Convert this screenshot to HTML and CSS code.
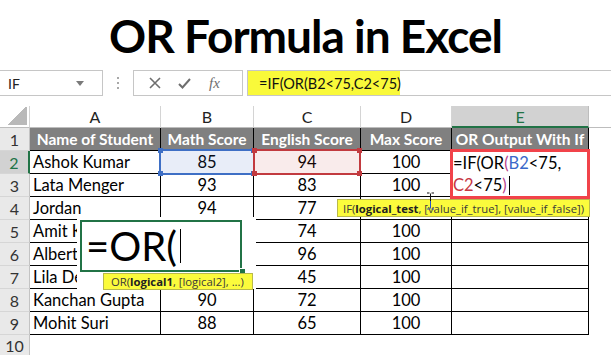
FILE: index.html
```html
<!DOCTYPE html>
<html>
<head>
<meta charset="utf-8">
<link rel="stylesheet" href="styles.css">
</head>
<body>
<h1 class="title">OR Formula in Excel</h1>
<div class="fbar">
  <div class="namebox"><span>IF</span><svg class="dd" width="8" height="5" viewBox="0 0 8 5"><path d="M0 0H8L4 5Z" fill="#7a7a7a"/></svg></div>
  <div class="dots"><span></span><span></span><span></span></div>
  <div class="btns">
    <svg width="12" height="12" viewBox="0 0 12 12"><path d="M1 1L11 11M11 1L1 11" stroke="#6e6e6e" stroke-width="1.6"/></svg>
    <svg width="13" height="11" viewBox="0 0 13 11"><path d="M1 6L4.5 9.5L12 1" stroke="#6e6e6e" stroke-width="2" fill="none"/></svg>
    <span class="fx">fx</span>
  </div>
  <div class="formula"><span class="hl">=IF(OR(B2&lt;75,C2&lt;75)</span></div>
</div>
<div class="sheet">
  <div class="corner"></div><div class="ch">A</div><div class="ch">B</div><div class="ch">C</div><div class="ch">D</div><div class="ch sel">E</div><div class="ch rest"></div>

  <div class="rn">1</div><div class="hd">Name of Student</div><div class="hd">Math Score</div><div class="hd">English Score</div><div class="hd">Max Score</div><div class="hd">OR Output With If</div><div class="blank"></div>

  <div class="rn act">2</div><div class="c l">Ashok Kumar</div><div class="c">85</div><div class="c">94</div><div class="c">100</div><div class="c"></div><div class="blank"></div>
  <div class="rn">3</div><div class="c l">Lata Menger</div><div class="c">93</div><div class="c">83</div><div class="c">100</div><div class="c"></div><div class="blank"></div>
  <div class="rn">4</div><div class="c l">Jordan</div><div class="c">94</div><div class="c">77</div><div class="c"></div><div class="c"></div><div class="blank"></div>
  <div class="rn">5</div><div class="c l">Amit K</div><div class="c"></div><div class="c">74</div><div class="c">100</div><div class="c"></div><div class="blank"></div>
  <div class="rn">6</div><div class="c l">Albert</div><div class="c"></div><div class="c">96</div><div class="c">100</div><div class="c"></div><div class="blank"></div>
  <div class="rn">7</div><div class="c l">Lila De</div><div class="c"></div><div class="c">45</div><div class="c">100</div><div class="c"></div><div class="blank"></div>
  <div class="rn">8</div><div class="c l">Kanchan Gupta</div><div class="c">90</div><div class="c">72</div><div class="c">100</div><div class="c"></div><div class="blank"></div>
  <div class="rn">9</div><div class="c l">Mohit Suri</div><div class="c">88</div><div class="c">65</div><div class="c">100</div><div class="c"></div><div class="blank"></div>
  <div class="rn last">10</div><div class="blank span"></div>

  <div class="rng rb"><i class="tl"></i><i class="tr"></i><i class="bl"></i><i class="br"></i></div>
  <div class="rng rc"><i class="tl"></i><i class="tr"></i><i class="bl"></i><i class="br"></i></div>

  <div class="edit">=IF(OR<span class="pp">(</span><span class="cb">B2</span>&lt;75,<br><span class="cr">C2</span>&lt;75<span class="pp">)</span><span class="caret"></span></div>

  <div class="tip tip-if">IF(<b>logical_test</b>, [value_if_true], [value_if_false])</div>
  <svg class="ibeam" width="9" height="18" viewBox="0 0 9 18"><path d="M1 1H3.5M5.5 1H8M4.5 1.5V9" stroke="#111" stroke-width="1" fill="none"/><path d="M4.5 9V16.5M1 17H3.5M5.5 17H8" stroke="#2a55c8" stroke-width="1" fill="none"/></svg>

  <div class="zoombox"><div class="zin">=OR(<span class="zcaret"></span></div><i class="zsq"></i></div>
  <div class="tip tip-or">OR(<b>logical1</b>, [logical2], ...)</div>
</div>
</body>
</html>
```
FILE: styles.css
```css
html, body {
  margin: 0;
  padding: 0;
  background: #fff;
  width: 611px;
  height: 355px;
  overflow: hidden;
  font-family: Lato, "Open Sans", sans-serif;
}

.title {
  margin: 0;
  height: 70px;
  display: flex;
  align-items: center;
  justify-content: center;
  padding-top: 1px;
  box-sizing: border-box;
  font-family: Lato, sans-serif;
  font-weight: 700;
  font-size: 46px;
  color: #000;
  letter-spacing: -1px;
}

.fbar {
  display: flex;
  align-items: stretch;
  height: 26px;
  font-family: Lato, sans-serif;
}

.namebox {
  width: 103px;
  box-sizing: border-box;
  border: 1px solid #c6c6c6;
  border-left: none;
  display: flex;
  align-items: center;
  justify-content: space-between;
  padding: 0 18px 0 8px;
  font-size: 14px;
  color: #222;
}

.dots {
  width: 30px;
  display: flex;
  flex-direction: column;
  align-items: center;
  justify-content: center;
  gap: 3px;
}
.dots span {
  width: 2px;
  height: 2px;
  background: #a8a8a8;
}

.btns {
  width: 110px;
  box-sizing: border-box;
  border: 1px solid #c6c6c6;
  display: flex;
  align-items: center;
  gap: 17px;
  padding-left: 15px;
}
.fx {
  font-family: "Liberation Serif", serif;
  font-style: italic;
  font-size: 15px;
  color: #6e6e6e;
  margin-left: 1px;
}

.formula {
  flex: 1;
  margin-left: 4px;
  box-sizing: border-box;
  border: 1px solid #c6c6c6;
  border-right: none;
  display: flex;
}
.hl {
  width: 152px;
  background: #f9f93a;
  font-size: 14.5px;
  color: #111;
  padding-left: 11px;
  box-sizing: border-box;
  display: flex;
  align-items: center;
}

.sheet {
  position: relative;
  margin-top: 10px;
  display: grid;
  grid-template-columns: 30px 131px 93px 107px 91px 137px 1fr;
  grid-template-rows: 22px repeat(9, 23px) 1fr;
  height: 249px;
  font-size: 16.5px;
  color: #000;
}
.sheet > div {
  box-sizing: border-box;
}

.corner {
  position: relative;
  border-right: 1px solid #d4d4d4;
  border-bottom: 1px solid #bdbdbd;
  background: linear-gradient(135deg, #fff 50%, #b9b9b9 50%) no-repeat;
  background-size: 20px 18px;
  background-position: right 2px bottom 2px;
}

.ch {
  border-right: 1px solid #d4d4d4;
  border-bottom: 1px solid #bdbdbd;
  display: flex;
  align-items: center;
  justify-content: center;
  font-size: 16px;
  color: #222;
}
.ch.sel {
  background: #d2d2d2;
  color: #217346;
  border-bottom: 2px solid #217346;
  border-right-color: #bdbdbd;
}
.ch.rest {
  border-right: none;
}

.rn {
  background: #e9e9e9;
  border-right: 1px solid #c3c3c3;
  border-bottom: 1px solid #d6d6d6;
  display: flex;
  align-items: center;
  justify-content: center;
  font-size: 16px;
  color: #333;
}
.rn.act {
  background: #d2d2d2;
  color: #217346;
  border-right: 2px solid #217346;
}
.rn.last {
  border-bottom: none;
}

.hd {
  background: #808080;
  color: #fff;
  font-weight: 700;
  border-right: 1px solid #000;
  border-bottom: 1px solid #000;
  display: flex;
  align-items: center;
  justify-content: center;
  white-space: nowrap;
  font-size: 15.5px;
}

.c {
  border-right: 1px solid #000;
  border-bottom: 1px solid #000;
  display: flex;
  align-items: center;
  justify-content: center;
  white-space: nowrap;
  overflow: hidden;
}
.c.l {
  justify-content: flex-start;
  padding-left: 3px;
}
.blank.span {
  grid-column: 2 / -1;
}

/* range highlights */
.rng {
  position: absolute;
  top: 43px;
  height: 26px;
  box-sizing: border-box;
}
.rng i {
  position: absolute;
  width: 5px;
  height: 5px;
}
.rng .tl { left: -3px; top: -3px; }
.rng .tr { right: -3px; top: -3px; }
.rng .bl { left: -3px; bottom: -3px; }
.rng .br { right: -3px; bottom: -3px; }
.rb {
  left: 159px;
  width: 96px;
  border: 2px solid #3e6fc5;
  background: rgba(62, 111, 197, 0.12);
}
.rb i { background: #3e6fc5; }
.rc {
  left: 253px;
  width: 108px;
  border: 2px solid #c23a3f;
  background: rgba(194, 58, 63, 0.1);
}
.rc i { background: #c23a3f; }

/* in-cell editor */
.edit {
  position: absolute;
  left: 450px;
  top: 43px;
  width: 140px;
  height: 50px;
  box-sizing: border-box;
  border: 3px solid #f1434a;
  background: #fff;
  font-size: 16.5px;
  line-height: 22px;
  color: #000;
}
.pp { color: #b8418a; }
.cb { color: #3a68c9; }
.cr { color: #c73843; }
.caret {
  display: inline-block;
  width: 1px;
  height: 19px;
  background: #000;
  vertical-align: -4px;
  margin-left: 2px;
}

.tip {
  position: absolute;
  box-sizing: border-box;
  background: #fbfb3c;
  border: 1px solid #b9b94a;
  font-family: "Open Sans", sans-serif;
  font-size: 11.3px;
  color: #3a3a3a;
  display: flex;
  align-items: center;
  padding-left: 5px;
  white-space: nowrap;
}
.tip b { color: #222; }
.tip-if {
  left: 337px;
  top: 93px;
  width: 253px;
  height: 18px;
}
.tip-or {
  left: 103px;
  top: 167px;
  width: 150px;
  height: 17px;
  padding-left: 7px;
}
.ibeam {
  position: absolute;
  left: 426px;
  top: 86px;
}

.zoombox {
  position: absolute;
  left: 77px;
  top: 111px;
  width: 179px;
  height: 72px;
  background: #fff;
}
.zin {
  position: absolute;
  left: 3px;
  top: 3px;
  width: 162px;
  height: 52px;
  box-sizing: border-box;
  border: 2px solid #217346;
  font-size: 40px;
  line-height: 46px;
  padding-left: 4px;
  color: #000;
  display: flex;
  align-items: center;
}
.zcaret {
  display: inline-block;
  width: 1px;
  height: 34px;
  background: #000;
  margin-left: 3px;
}
.zsq {
  position: absolute;
  left: 162px;
  top: 51px;
  width: 5px;
  height: 5px;
  background: #217346;
  border: 1px solid #fff;
}
```
